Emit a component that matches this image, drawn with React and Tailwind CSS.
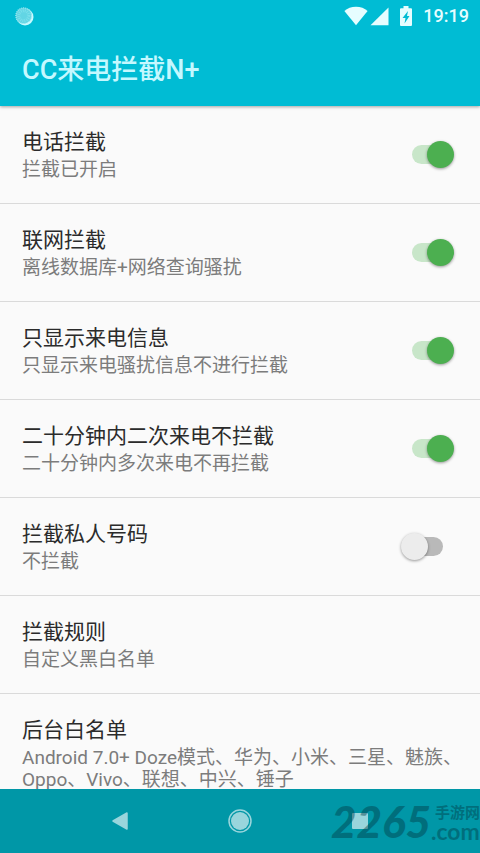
import React, { useState } from "react";

const settings = [
  { id: "calls", title: "电话拦截", summary: "拦截已开启", enabled: true },
  { id: "online", title: "联网拦截", summary: "离线数据库+网络查询骚扰", enabled: true },
  { id: "info", title: "只显示来电信息", summary: "只显示来电骚扰信息不进行拦截", enabled: true },
  { id: "repeat", title: "二十分钟内二次来电不拦截", summary: "二十分钟内多次来电不再拦截", enabled: true },
  { id: "private", title: "拦截私人号码", summary: "不拦截", enabled: false },
  { id: "rules", title: "拦截规则", summary: "自定义黑白名单" },
  {
    id: "whitelist",
    title: "后台白名单",
    summary: "Android 7.0+ Doze模式、华为、小米、三星、魅族、Oppo、Vivo、联想、中兴、锤子",
  },
];

function StatusBar() {
  return (
    <div className="flex h-8 items-center pl-[15px] pr-[11px]">
      <svg width="19" height="19" viewBox="0 0 19 19" aria-hidden="true">
        <circle cx="10" cy="10" r="8.5" fill="#c9faff" />
        <circle cx="8.7" cy="8.7" r="8" fill="#62d5e4" />
        <circle cx="8.7" cy="8.7" r="7.8" fill="none" stroke="#a5eaf2" strokeWidth="1.2" strokeDasharray="1 1" />
        <circle cx="8.7" cy="8.7" r="5" fill="none" stroke="#7bdfeb" strokeWidth="3" strokeDasharray="1 1" />
      </svg>
      <div className="ml-auto flex items-center text-[#e6fdff]">
        <svg width="24" height="20" viewBox="0 0 24 20" fill="currentColor" aria-hidden="true">
          <path d="M12 19.3 0.4 5C3.4 2.2 7.4 0.7 12 0.7S20.6 2.2 23.6 5Z" />
        </svg>
        <svg className="ml-[2px]" width="19" height="20" viewBox="0 0 19 20" fill="currentColor" aria-hidden="true">
          <path d="M18.5 1.5V19.3H0.5Z" />
        </svg>
        <svg className="ml-[11px]" width="12" height="20" viewBox="0 0 12 20" aria-hidden="true">
          <path
            d="M3.5 0h5v2.2H11a1 1 0 0 1 1 1V19a1 1 0 0 1-1 1H1a1 1 0 0 1-1-1V3.2a1 1 0 0 1 1-1h2.5Z"
            fill="currentColor"
          />
          <path d="M8 5 2.500 12h3L4.500 17.500 9.500 10H7Z" fill="#00bcd4" />
        </svg>
        <span className="ml-[11px] text-[18px] leading-6 font-medium">19:19</span>
      </div>
    </div>
  );
}

function Switch({ id, checked, onChange }) {
  return (
    <input
      id={id}
      type="checkbox"
      role="switch"
      checked={checked}
      onChange={onChange}
      className="relative h-[27px] w-[53px] shrink-0 cursor-pointer appearance-none before:absolute before:top-1 before:left-[11px] before:h-[19px] before:w-[31px] before:rounded-full before:bg-[#b9b9b9] after:absolute after:top-0 after:left-0 after:size-[27px] after:rounded-full after:bg-[#ececec] after:shadow-[0_1px_3px_rgba(0,0,0,0.4)] checked:before:bg-[#c8e6c9] checked:after:left-auto checked:after:right-0 checked:after:bg-[#4caf50]"
    />
  );
}

function SettingText({ title, summary }) {
  return (
    <>
      <span className="block text-[21px] leading-[30px] text-[#2b2b2b]">{title}</span>
      <span className="mt-[2px] block text-[19px] leading-[22px] text-[#7c7c7c]">{summary}</span>
    </>
  );
}

function SettingRow({ item, checked, onToggle }) {
  if (item.enabled === undefined) {
    return (
      <li className="border-b border-[#dadada]">
        <button type="button" className="block w-full pt-[21px] pr-4 pb-[22px] pl-[22px] text-left">
          <SettingText title={item.title} summary={item.summary} />
        </button>
      </li>
    );
  }

  return (
    <li className="flex items-center border-b border-[#dadada] pr-[26px] pl-[22px]">
      <label htmlFor={item.id} className="flex-1 cursor-pointer pt-[21px] pb-[22px]">
        <SettingText title={item.title} summary={item.summary} />
      </label>
      <Switch id={item.id} checked={checked} onChange={onToggle} />
    </li>
  );
}

function NavBar() {
  return (
    <nav className="relative flex h-16 shrink-0 items-center bg-[#0097a7] px-15">
      <button type="button" aria-label="Back" className="flex flex-1 justify-center">
        <svg width="16" height="18" viewBox="0 0 16 18">
          <path d="M15 1v16L1 9Z" fill="#99d5dc" stroke="#99d5dc" strokeWidth="1.5" strokeLinejoin="round" />
        </svg>
      </button>
      <button type="button" aria-label="Home" className="flex flex-1 justify-center">
        <svg width="24" height="24" viewBox="0 0 24 24">
          <circle cx="12" cy="12" r="11" fill="none" stroke="#99d5dc" strokeWidth="1.5" />
          <circle cx="12" cy="12" r="9" fill="#99d5dc" />
        </svg>
      </button>
      <button type="button" aria-label="Recents" className="flex flex-1 justify-center">
        <svg width="16" height="16" viewBox="0 0 16 16">
          <rect width="16" height="16" rx="1" fill="#99d5dc" />
        </svg>
      </button>
      <div className="pointer-events-none absolute top-3 right-0 flex items-start text-[#003c46]/45">
        <span className="font-['Lato',sans-serif] text-[44px] leading-10 font-black italic">2265</span>
        <span className="flex flex-col pt-1">
          <span className="pl-1 text-[15px] leading-4 font-bold">手游网</span>
          <span className="font-['Lato',sans-serif] text-[23px] leading-5 font-bold">.com</span>
        </span>
      </div>
    </nav>
  );
}

export default function App() {
  const [enabled, setEnabled] = useState(() =>
    Object.fromEntries(settings.map((item) => [item.id, Boolean(item.enabled)]))
  );

  const toggle = (id) => setEnabled((prev) => ({ ...prev, [id]: !prev[id] }));

  return (
    <div className="flex h-screen flex-col bg-[#fafafa] font-['Roboto','Noto_Sans_CJK_SC',sans-serif]">
      <header className="relative shrink-0 bg-[#00bcd4] shadow-[0_1px_3px_rgba(0,0,0,0.35)]">
        <StatusBar />
        <h1 className="px-[22px] pt-5 pb-[18px] text-[27px] leading-9 font-medium text-[#c4f8ff]">CC来电拦截N+</h1>
      </header>
      <main className="min-h-0 flex-1 overflow-hidden">
        <ul>
          {settings.map((item) => (
            <SettingRow key={item.id} item={item} checked={enabled[item.id]} onToggle={() => toggle(item.id)} />
          ))}
        </ul>
      </main>
      <NavBar />
    </div>
  );
}
